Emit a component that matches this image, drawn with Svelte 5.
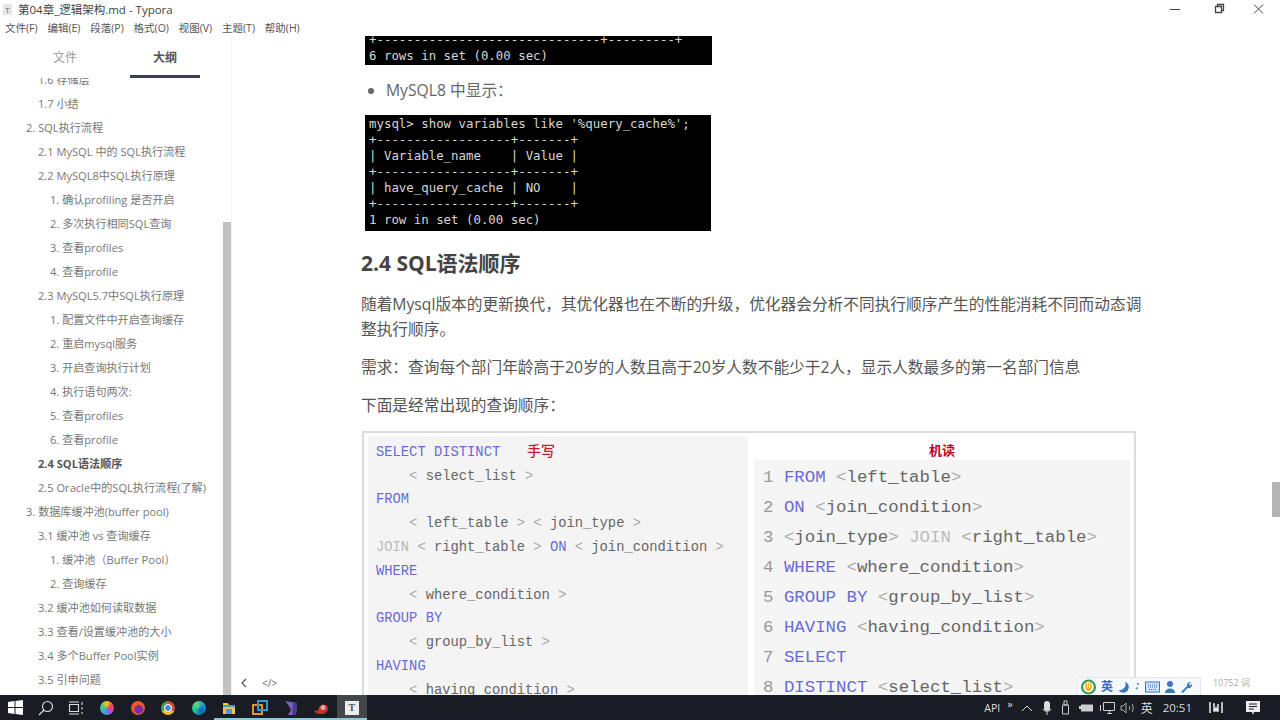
<script>
  const menus = ['文件(F)', '编辑(E)', '段落(P)', '格式(O)', '视图(V)', '主题(T)', '帮助(H)'];
  const outline = [
    [1, '1.6 存储层'], [1, '1.7 小结'], [0, '2. SQL执行流程'], [1, '2.1 MySQL 中的 SQL执行流程'],
    [1, '2.2 MySQL8中SQL执行原理'], [2, '1. 确认profiling 是否开启'], [2, '2. 多次执行相同SQL查询'],
    [2, '3. 查看profiles'], [2, '4. 查看profile'], [1, '2.3 MySQL5.7中SQL执行原理'],
    [2, '1. 配置文件中开启查询缓存'], [2, '2. 重启mysql服务'], [2, '3. 开启查询执行计划'],
    [2, '4. 执行语句两次:'], [2, '5. 查看profiles'], [2, '6. 查看profile'], [1, '2.4 SQL语法顺序', true],
    [1, '2.5 Oracle中的SQL执行流程(了解)'], [0, '3. 数据库缓冲池(buffer pool)'], [1, '3.1 缓冲池 vs 查询缓存'],
    [2, '1. 缓冲池（Buffer Pool）'], [2, '2. 查询缓存'], [1, '3.2 缓冲池如何读取数据'],
    [1, '3.3 查看/设置缓冲池的大小'], [1, '3.4 多个Buffer Pool实例'], [1, '3.5 引申问题']
  ];
  const t1 = `+------------------------------+---------+
6 rows in set (0.00 sec)`;
  const t2 = `mysql> show variables like '%query_cache%';
+------------------+-------+
| Variable_name    | Value |
+------------------+-------+
| have_query_cache | NO    |
+------------------+-------+
1 row in set (0.00 sec)`;
  const k = 'k', x = 't', b = 'b', j = 'j';
  const left = [
    [[k, 'SELECT DISTINCT'], [x, '   '], ['r', '手写']],
    [[b, '    < '], [x, 'select_list'], [b, ' >']],
    [[k, 'FROM']],
    [[b, '    < '], [x, 'left_table'], [b, ' > < '], [x, 'join_type'], [b, ' >']],
    [[j, 'JOIN'], [b, ' < '], [x, 'right_table'], [b, ' > '], [k, 'ON'], [b, ' < '], [x, 'join_condition'], [b, ' >']],
    [[k, 'WHERE']],
    [[b, '    < '], [x, 'where_condition'], [b, ' >']],
    [[k, 'GROUP BY']],
    [[b, '    < '], [x, 'group_by_list'], [b, ' >']],
    [[k, 'HAVING']],
    [[b, '    < '], [x, 'having_condition'], [b, ' >']]
  ];
  const right = [
    [[k, 'FROM'], [b, ' <'], [x, 'left_table'], [b, '>']],
    [[k, 'ON'], [b, ' <'], [x, 'join_condition'], [b, '>']],
    [[b, '<'], [x, 'join_type'], [b, '> '], [j, 'JOIN'], [b, ' <'], [x, 'right_table'], [b, '>']],
    [[k, 'WHERE'], [b, ' <'], [x, 'where_condition'], [b, '>']],
    [[k, 'GROUP BY'], [b, ' <'], [x, 'group_by_list'], [b, '>']],
    [[k, 'HAVING'], [b, ' <'], [x, 'having_condition'], [b, '>']],
    [[k, 'SELECT']],
    [[k, 'DISTINCT'], [b, ' <'], [x, 'select_list'], [b, '>']]
  ];
</script>

<div class="app">
  <header class="titlebar">
    <span class="appicon">T</span>
    <span class="title">第04章_逻辑架构.md - Typora</span>
    <div class="winctl">
      <svg width="46" height="18" viewBox="0 0 46 18"><path d="M17 9.500h10" stroke="#444" fill="none"/></svg>
      <svg width="40" height="18" viewBox="0 0 40 18"><path d="M16.500 6.500h6v6h-6zM18.500 6.500v-2h6v6h-2" stroke="#444" stroke-width="1.300" fill="none"/></svg>
      <svg width="40" height="18" viewBox="0 0 40 18"><path d="M15 4.500l9 9M24 4.500l-9 9" stroke="#444" fill="none"/></svg>
    </div>
  </header>
  <nav class="menubar">
    {#each menus as m}<span>{m}</span>{/each}
  </nav>

  <main class="main">
    <aside class="sidebar">
      <div class="side-col">
        <div class="tabs">
          <span class="tab">文件</span>
          <span class="tab current">大纲</span>
        </div>
        <div class="outline">
          <ul>
            {#each outline as [lvl, text, on]}
              <li class="lvl{lvl}" class:on>{text}</li>
            {/each}
          </ul>
        </div>
      </div>
      <div class="side-track"><div class="side-thumb"></div></div>
    </aside>

    <section class="editor">
      <div class="doc">
        <div class="term t1"><pre>{t1}</pre></div>
        <ul class="bullets"><li>MySQL8 中显示：</li></ul>
        <div class="term t2"><pre>{t2}</pre></div>
        <h2>2.4 SQL语法顺序</h2>
        <p>随着Mysql版本的更新换代，其优化器也在不断的升级，优化器会分析不同执行顺序产生的性能消耗不同而动态调整执行顺序。</p>
        <p>需求：查询每个部门年龄高于20岁的人数且高于20岁人数不能少于2人，显示人数最多的第一名部门信息</p>
        <p>下面是经常出现的查询顺序：</p>
        <div class="figure">
          <div class="hand">
            {#each left as line}
              <div class="cl">{#each line as [c, s]}<span class={c}>{s}</span>{/each}</div>
            {/each}
          </div>
          <div class="machine">
            <div class="mhead">机读</div>
            <div class="mbody">
              {#each right as line, i}
                <div class="cr"><span class="n">{`${i + 1} `}</span>{#each line as [c, s]}<span class={c}>{s}</span>{/each}</div>
              {/each}
            </div>
          </div>
        </div>
      </div>

      <div class="foot-left">
        <svg width="10" height="12" viewBox="0 0 10 12"><path d="M7 2L3 6l4 4" stroke="#555" stroke-width="1.200" fill="none"/></svg>
        <span>&lt;/&gt;</span>
      </div>
      <div class="count">10752 词</div>
      <div class="doc-thumb"></div>
      <div class="ime">
        <svg width="17" height="16" viewBox="0 0 17 16"><circle cx="8.500" cy="8" r="6.500" fill="none" stroke="#3a9a5a" stroke-width="2.200"/><path d="M5.500 3.500v5.500a3 3 0 0 0 6 0V3.500" fill="#f2b21c"/><path d="M7.500 3v6M9.500 3v6" stroke="#fff" stroke-width=".8"/></svg>
        <b>英</b>
        <svg width="12" height="14" viewBox="0 0 12 14"><path d="M8 1.500A6 6 0 0 1 1.500 10 5.500 5.500 0 0 0 11 10 6 6 0 0 0 8 1.500z" fill="#3b78c4"/></svg>
        <svg width="8" height="14" viewBox="0 0 8 14"><circle cx="5" cy="4" r="1" fill="#3b78c4"/><path d="M3 9l1.500-1.500" stroke="#3b78c4" stroke-width="1.400"/></svg>
        <svg width="15" height="12" viewBox="0 0 15 12"><rect x=".5" y="1" width="14" height="10" fill="#cfe2f8" stroke="#3b78c4"/><path d="M3 4h9M3 6h9M4 8.500h7" stroke="#3b78c4" stroke-dasharray="1 1"/></svg>
        <svg width="12" height="14" viewBox="0 0 12 14"><circle cx="6" cy="4" r="3" fill="#3b78c4"/><path d="M1 13c0-6 10-6 10 0z" fill="#3b78c4"/></svg>
        <svg width="13" height="14" viewBox="0 0 13 14"><path d="M1 12l6-6a3.500 3.500 0 0 1 4-4L9 4l1 1.500 2-1.500a3.500 3.500 0 0 1-4.500 4L3 13z" fill="#3b78c4"/></svg>
      </div>
    </section>
  </main>

  <footer class="taskbar">
    <div class="apps">
      <span class="slot"><svg width="15" height="15" viewBox="0 0 15 15"><path d="M0 2l6.500-1v6H0zM7.500 1L15 0v7H7.500zM0 8h6.500v6L0 13zM7.500 8H15v7l-7.500-1z" fill="#fff"/></svg></span>
      <span class="slot"><svg width="16" height="16" viewBox="0 0 16 16"><circle cx="9.500" cy="6.500" r="5" fill="none" stroke="#ddd" stroke-width="1.100"/><path d="M6 10l-5 5" stroke="#ddd" stroke-width="1.200"/></svg></span>
      <span class="slot"><svg width="16" height="14" viewBox="0 0 16 14"><path d="M1.500 3.500h9v7h-9zM1 1h10M1 13h10M14 1v3M14 6v2.500M14 11v2" stroke="#ddd" stroke-width="1.100" fill="none"/></svg></span>
      <span class="slot"><i class="ball rainbow"></i></span>
      <span class="slot"><i class="ball fox"></i></span>
      <span class="slot"><i class="ball chrome"></i></span>
      <span class="slot"><i class="ball edge"></i></span>
      <span class="slot run"><svg width="14" height="14" viewBox="0 0 14 14"><path d="M1 2h5l1 2h6v9H1z" fill="#f2c24a"/><path d="M1 4h12v2H1z" fill="#3aa0c8"/><path d="M4 8h6v5H4z" fill="#4a9ad8"/></svg></span>
      <span class="slot run"><svg width="16" height="16" viewBox="0 0 16 16"><rect x="1" y="5" width="9" height="9" fill="none" stroke="#e8922a" stroke-width="2"/><rect x="6" y="1" width="9" height="9" fill="none" stroke="#2a9ad0" stroke-width="2"/></svg></span>
      <span class="slot run"><svg width="14" height="16" viewBox="0 0 14 16"><path d="M1 1l12 2-1 12-8 0 3-5-2-4z" fill="#7a62c0"/><path d="M9 3l4 0-1 12-4 0z" fill="#4a3a90"/></svg></span>
      <span class="slot run"><svg width="16" height="14" viewBox="0 0 16 14"><path d="M1 10c2-1 3 0 4 0 0-7 9-9 10-3 0 4-3 6-7 6-3 0-6-1-7-3z" fill="#c8302a"/><circle cx="10" cy="6.500" r="2.500" fill="#e8a8a0"/></svg></span>
      <span class="slot run open"><span class="typ">T</span></span>
    </div>
    <div class="tray">
      <span class="api">API</span>
      <span class="more">»</span>
      <svg width="14" height="8" viewBox="0 0 14 8"><path d="M2 7l5-5 5 5" stroke="#ddd" fill="none"/></svg>
      <svg class="mic" width="10" height="16" viewBox="0 0 10 16"><rect x="2" y="1" width="6" height="10" rx="3" fill="#ddd"/><path d="M1 9c1 3 7 3 8 0M5 12v3" stroke="#ddd" fill="none"/></svg>
      <svg class="usb" width="9" height="15" viewBox="0 0 9 15"><path d="M1.500 5h6v9h-6zM3 1h3v4H3z" stroke="#ccc" fill="none"/></svg>
      <svg class="bat" width="15" height="10" viewBox="0 0 15 10"><rect x="2" y="1.500" width="12" height="7" fill="#ccc"/><path d="M0 3h2v3H0z" fill="#ccc"/></svg>
      <svg class="mon" width="15" height="14" viewBox="0 0 15 14"><path d="M3.500 1.500h11v8h-11zM7 12.500h5M9.500 9.500v3M.5 4v6" stroke="#ccc" fill="none"/></svg>
      <svg class="spk" width="14" height="12" viewBox="0 0 14 12"><path d="M1 4h2l3-3v10L3 8H1zM9 4c1 1 1 3 0 4M12 2c1.500 2 1.500 6 0 8" stroke="#aaa" fill="none"/></svg>
      <span class="cn">英</span>
      <span class="clock">20:51</span>
      <svg class="im" width="14" height="11" viewBox="0 0 14 11"><path d="M1 0v11M13 0v11M4 2h1v7h1l1-3 1 3h1V2" stroke="#eee" stroke-width="1.500" fill="none"/></svg>
      <svg class="note" width="14" height="14" viewBox="0 0 14 14"><path d="M0 0h14v11H8l-1 3-1-3H0z" fill="#eee"/><path d="M3 3h8M3 5.500h8M3 8h5" stroke="#1a1d24"/></svg>
    </div>
  </footer>
</div>

<style>
  :global(body) { margin: 0; background: #fff; }
  .app {
    width: 1280px; height: 720px; overflow: hidden; position: relative;
    display: flex; flex-direction: column;
    font-family: "Open Sans", "Noto Sans CJK SC", sans-serif; color: #666;
  }
  .titlebar { height: 18px; display: flex; align-items: center; flex: none; padding-left: 3px; }
  .appicon {
    width: 9px; height: 11px; background: #e6e6e6; color: #666; font-size: 8px; line-height: 11px;
    text-align: center; margin-right: 6px;
  }
  .title { font-size: 11.500px; color: #444; }
  .winctl { margin-left: auto; display: flex; padding-right: 1px; }
  .winctl svg { display: block; }
  .menubar {
    height: 18px; flex: none; display: flex; gap: 9.800px; padding: 1px 0 0 5px; box-sizing: border-box;
    font-size: 10.500px; line-height: 18px; color: #555; position: relative; z-index: 2;
  }
  .main { flex: 1; display: flex; min-height: 0; }
  .sidebar { width: 231px; flex: none; display: flex; }
  .side-col { width: 223px; display: flex; flex-direction: column; }
  .tabs { height: 42px; flex: none; display: flex; gap: 30px; padding-left: 30px; box-sizing: border-box; }
  .tab {
    width: 70px; text-align: center; font-size: 12px; line-height: 44px; color: #999; box-sizing: border-box;
  }
  .tab.current { color: #555; font-weight: 700; border-bottom: 3px solid #3d3f5a; }
  .outline { flex: 1; overflow: hidden; min-height: 0; }
  .outline ul { list-style: none; margin: -10px 0 0; padding: 0; }
  .outline li { height: 24px; line-height: 24px; font-size: 11.100px; color: #777; white-space: nowrap; }
  .lvl0 { padding-left: 26px; }
  .lvl1 { padding-left: 38px; }
  .lvl2 { padding-left: 50px; }
  .outline li.on { font-weight: 700; color: #555; }
  .side-track { width: 8px; }
  .side-thumb { margin-top: 186px; height: 473px; background: #c2c2c2; }

  .editor { flex: 1; position: relative; overflow: hidden; min-width: 0; border-left: 1px solid #f4f4f4; }
  .doc { width: 783px; margin-left: 129px; font-size: 15.700px; line-height: 25.600px; color: #555; }
  .term {
    margin: 0 0 0 4px; background: #000; overflow: hidden; box-sizing: border-box; padding-left: 4px;
  }
  .term pre {
    margin: 0; color: #d6d6d6;
    font-family: "DejaVu Sans Mono", monospace; font-size: 12.400px; line-height: 16px;
  }
  .t1 { width: 347px; height: 29px; }
  .t1 pre { margin-top: -4px; }
  .t2 { width: 346px; height: 116px; margin-top: 11px; padding-top: 1px; }
  .bullets { margin: 13px 0 0; padding: 0 0 0 25px; }
  .bullets li { color: #666; height: 25.600px; }
  .bullets li::marker { color: #666; }
  h2 {
    margin: 19px 0 0; font-size: 21px; line-height: 26px; font-weight: 700; color: #444;
  }
  p { margin: 0 0 12.300px; }
  h2 + p { margin-top: 16px; }
  .figure {
    margin: 12px 0 0 1px; width: 774px; height: 330px; box-sizing: border-box;
    border: 2px solid #dcdcdc; padding: 3px 4px 0; display: flex; gap: 6px; background: #fff;
  }
  .hand {
    width: 380px; flex: none; background: #f4f4f4; padding: 3px 0 0 8px; box-sizing: border-box;
    font-family: "Liberation Mono", monospace; font-size: 13.800px; line-height: 23.800px;
  }
  .cl, .cr { white-space: pre; }
  .machine { flex: 1; display: flex; flex-direction: column; min-width: 0; }
  .mhead {
    height: 24px; flex: none; text-align: center; font-size: 13px; line-height: 29px; font-weight: 700; color: #c00020;
  }
  .mbody {
    flex: 1; background: #f5f5f5; padding: 3px 0 0 9px;
    font-family: "Liberation Mono", monospace; font-size: 17.400px; line-height: 30px;
  }
  .n { color: #999; }
  .k { color: #6a6ad4; }
  .t { color: #666; }
  .b { color: #aaa; }
  .j { color: #bbb; }
  .r { color: #c81e32; font-family: "Noto Sans CJK SC", sans-serif; font-size: 14px; font-weight: 500; margin-left: 2px; }

  .foot-left {
    position: absolute; left: 7px; bottom: 5px; display: flex; align-items: center; gap: 13px;
    font-size: 10px; line-height: 14px; color: #666;
  }
  .count { position: absolute; right: 30px; bottom: 5px; font-size: 9px; line-height: 14px; color: #aaa; }
  .doc-thumb { position: absolute; right: 0; top: 446px; width: 8px; height: 35px; background: #b4b4b4; }
  .ime {
    position: absolute; left: 845px; bottom: 0; width: 124px; height: 18px; box-sizing: border-box;
    background: #f6faff; border: 1px solid #dfe8f2; border-bottom: 0; display: flex; align-items: center;
    gap: 4px; padding-left: 2px;
  }
  .ime b { font-size: 12px; line-height: 16px; color: #2f72c0; font-weight: 700; }

  .taskbar { height: 25px; flex: none; background: #191c23; display: flex; align-items: center; }
  .apps { display: flex; height: 25px; }
  .slot { width: 30.600px; height: 25px; box-sizing: border-box; display: flex; align-items: center; justify-content: center; }
  .run { box-shadow: inset 0 -2px 0 0 #8cc8dc; }
  .open { background: #44464c; }
  .ball { width: 14px; height: 14px; border-radius: 50%; display: block; }
  .rainbow { background: conic-gradient(#f4c430, #e8483a, #d040c0, #5a80e8, #36b8c8, #60c860, #f4c430); }
  .fox { background: radial-gradient(circle at 55% 60%, #7a2ca0 0 35%, #e8582a 40% 70%, #f2a030 100%); }
  .chrome { background: radial-gradient(circle, #4a88d8 0 28%, #eee 30% 38%, transparent 40%), conic-gradient(#d8483a 0 120deg, #e8c030 120deg 240deg, #4aa050 240deg); }
  .edge { background: conic-gradient(from 60deg, #1e90d8, #0a6aa8, #20c0a0, #60d870, #1e90d8); }
  .typ {
    width: 14px; height: 14px; background: #eee; color: #555; font: 700 10px/14px "Liberation Serif", serif; text-align: center; display: block;
  }
  .tray { margin-left: auto; display: flex; align-items: center; height: 25px; gap: 7px; padding-right: 20px; color: #ddd; font-size: 11px; }
  .api { font-size: 10.500px; }
  .more { font-size: 11px; line-height: 10px; margin: -8px 0 0 0; }
  .mic { margin-left: 1px; }
  .usb { margin-left: 2.500px; }
  .bat { margin-left: 2px; }
  .mon { margin-left: -1px; }
  .spk { margin-left: -2.500px; }
  .cn { font-size: 12px; }
  .clock { font-size: 11.500px; margin-left: 3px; }
  .im { margin-left: 10px; }
  .note { margin-left: 16px; }
</style>
